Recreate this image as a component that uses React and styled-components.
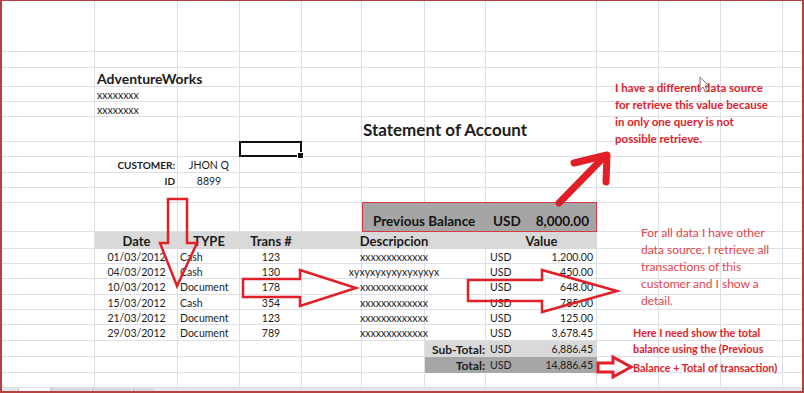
import React from 'react'
import styled, { createGlobalStyle } from 'styled-components'

const GlobalStyle = createGlobalStyle`
  html, body {
    margin: 0;
    padding: 0;
    background: #ffffff;
    overflow: hidden;
  }
`

const COLS = [95, 83, 62, 62, 60, 63, 61, 111, 62, 62, 62, 21]
const ROWS = [52, 16, 19, 15, 15, 25, 15, 16, 15, 15, 29, 17, 15, 15, 16, 15, 15, 16, 16, 16, 15]

const Frame = styled.div`
  position: relative;
  width: 804px;
  height: 393px;
  overflow: hidden;
  font-family: Lato, 'Liberation Sans', sans-serif;
  color: #1c1c1c;
`

const Sheet = styled.div`
  display: grid;
  grid-template-columns: ${COLS.map((c) => c + 'px').join(' ')};
  grid-template-rows: ${ROWS.map((r) => r + 'px').join(' ')};
`

const GridCell = styled.div`
  box-sizing: border-box;
  border-right: 1px solid #dcdfe3;
  border-bottom: 1px solid #dcdfe3;
`

const Cell = styled.div`
  grid-column: ${(p) => p.$col} / span ${(p) => p.$span || 1};
  grid-row: ${(p) => p.$row};
  display: flex;
  align-items: ${(p) => p.$valign || 'center'};
  justify-content: ${(p) => p.$align || 'flex-start'};
  padding: 0 ${(p) => p.$pad ?? 3}px;
  font-size: ${(p) => p.$size || 10.5}px;
  font-weight: ${(p) => (p.$bold ? 700 : 400)};
  white-space: nowrap;
  background: ${(p) => p.$bg || 'transparent'};
  box-sizing: border-box;
  z-index: 1;
`

const Shade = styled.div`
  grid-column: ${(p) => p.$col} / span ${(p) => p.$span || 1};
  grid-row: ${(p) => p.$row};
  background: ${(p) => p.$bg};
`

const BalanceBox = styled.div`
  grid-column: 6 / span 3;
  grid-row: 11;
  margin-top: -1px;
  background: #a5a5a5;
  border: 1px solid #d23b42;
  display: flex;
  align-items: flex-end;
  padding: 0 7px 2px 10px;
  font-size: 13.5px;
  font-weight: 700;
  color: #141414;
  z-index: 2;
`

const BalanceLabel = styled.span`
  width: 120px;
`

const BalanceCur = styled.span`
  flex: 1;
`

const Selected = styled.div`
  grid-column: 4;
  grid-row: 7;
  margin: -1px 0 0 -1px;
  border: 2px solid #111;
  position: relative;
  z-index: 2;
  &::after {
    content: '';
    position: absolute;
    right: -4px;
    bottom: -4px;
    width: 5px;
    height: 5px;
    background: #111;
    border: 1px solid #fff;
  }
`

const MoneyCell = styled(Cell)`
  justify-content: space-between;
  padding: 0 4px 0 4px;
`

const TabBar = styled.div`
  height: 5px;
  background: #e4e7eb;
  display: flex;
  gap: 2px;
  padding-left: 18px;
`

const Tab = styled.div`
  width: ${(p) => p.$w}px;
  background: ${(p) => (p.$active ? '#ffffff' : '#d6dae0')};
  border-left: 1px solid #b9bec6;
`

const Outline = styled.div`
  position: absolute;
  inset: 0;
  border: 2px solid #b8413f;
  border-top-width: 1px;
  pointer-events: none;
  z-index: 5;
`

const Overlay = styled.svg`
  position: absolute;
  left: 0;
  top: 0;
  z-index: 4;
  pointer-events: none;
`

const Note = styled.div`
  position: absolute;
  left: ${(p) => p.$x}px;
  top: ${(p) => p.$y}px;
  font-size: ${(p) => p.$size}px;
  line-height: ${(p) => p.$lh}px;
  font-weight: ${(p) => (p.$bold ? 700 : 400)};
  color: ${(p) => p.$color};
  white-space: nowrap;
  z-index: 3;
`

const rows = [
  ['01/03/2012', 'Cash', '123', 'xxxxxxxxxxxxx', '1,200.00'],
  ['04/03/2012', 'Cash', '130', 'xyxyxyxyxyxyxyxyx', '450.00'],
  ['10/03/2012', 'Document', '178', 'xxxxxxxxxxxxx', '648.00'],
  ['15/03/2012', 'Cash', '354', 'xxxxxxxxxxxxx', '785.00'],
  ['21/03/2012', 'Document', '123', 'xxxxxxxxxxxxx', '125.00'],
  ['29/03/2012', 'Document', '789', 'xxxxxxxxxxxxx', '3,678.45'],
]

function Arrows() {
  const red = '#e21f27'
  return (
    <Overlay width="804" height="393" viewBox="0 0 804 393">
      <g fill="none" stroke={red} strokeWidth="7" strokeLinecap="round" strokeLinejoin="round">
        <line x1="559" y1="203" x2="602" y2="159" />
        <polyline points="574,163 607,155 606,182" />
      </g>
      <g fill="none" stroke={red} strokeWidth="2.5" strokeLinejoin="miter">
        <polygon points="168,199 187,199 187,243 197,243 177,286 160,243 168,243" />
        <polygon points="243,279 300,279 300,270 356,288 300,306 300,297 243,297" />
        <polygon points="468,280 542,280 542,270 617,291 542,312 542,301 468,301" />
        <polygon strokeWidth="3" points="598,363 613,363 613,357 631,367 613,377 613,372 598,372" />
      </g>
      <path
        d="M700 77 L700 90 L703 87 L705.5 92 L707.5 91 L705 86 L709 86 Z"
        fill="#ffffff"
        stroke="#555"
        strokeWidth="0.8"
      />
    </Overlay>
  )
}

export default function App() {
  const gridCells = []
  ROWS.forEach((_, r) => {
    COLS.forEach((_, c) => {
      gridCells.push(<GridCell key={r + '-' + c} style={{ gridColumn: c + 1, gridRow: r + 1 }} />)
    })
  })

  return (
    <>
      <GlobalStyle />
      <Frame>
        <Sheet>
          {gridCells}

          <Cell $col={2} $row={3} $span={3} $size={14} $bold $pad={2} $valign="flex-end">
            AdventureWorks
          </Cell>
          <Cell $col={2} $row={4} $pad={2} $size={10.5}>xxxxxxxx</Cell>
          <Cell $col={2} $row={5} $pad={2} $size={10.5}>xxxxxxxx</Cell>

          <Cell $col={6} $row={6} $span={4} $size={17} $bold $pad={1}>
            Statement of Account
          </Cell>

          <Selected />

          <Cell $col={2} $row={8} $align="flex-end" $bold $size={10}>CUSTOMER:</Cell>
          <Cell $col={3} $row={8} $align="center">JHON Q</Cell>
          <Cell $col={2} $row={9} $align="flex-end" $bold $size={10}>ID</Cell>
          <Cell $col={3} $row={9} $align="center">8899</Cell>

          <BalanceBox>
            <BalanceLabel>Previous Balance</BalanceLabel>
            <BalanceCur>USD</BalanceCur>
            <span>8,000.00</span>
          </BalanceBox>

          <Shade $col={2} $span={7} $row={12} $bg="#d9d9d9" />
          <Cell $col={2} $row={12} $align="center" $bold $size={13} $valign="flex-end">Date</Cell>
          <Cell $col={3} $row={12} $align="center" $bold $size={13} $valign="flex-end">TYPE</Cell>
          <Cell $col={4} $row={12} $align="center" $bold $size={13} $valign="flex-end">Trans #</Cell>
          <Cell $col={5} $span={3} $row={12} $align="center" $bold $size={13} $valign="flex-end">
            Descripcion
          </Cell>
          <Cell $col={8} $row={12} $align="center" $bold $size={13} $valign="flex-end">Value</Cell>

          {rows.map((r, i) => (
            <React.Fragment key={i}>
              <Cell $col={2} $row={13 + i} $align="center">{r[0]}</Cell>
              <Cell $col={3} $row={13 + i} $pad={2}>{r[1]}</Cell>
              <Cell $col={4} $row={13 + i} $align="center">{r[2]}</Cell>
              <Cell $col={5} $span={3} $row={13 + i} $align="center">{r[3]}</Cell>
              <MoneyCell $col={8} $row={13 + i}>
                <span>USD</span>
                <span>{r[4]}</span>
              </MoneyCell>
            </React.Fragment>
          ))}

          <Shade $col={7} $span={2} $row={19} $bg="#d9d9d9" />
          <Cell $col={7} $row={19} $align="flex-end" $bold $size={12} $pad={1}>Sub-Total:</Cell>
          <MoneyCell $col={8} $row={19}>
            <span>USD</span>
            <span>6,886.45</span>
          </MoneyCell>

          <Shade $col={7} $span={2} $row={20} $bg="#a6a6a6" />
          <Cell $col={7} $row={20} $align="flex-end" $bold $size={12} $pad={1}>Total:</Cell>
          <MoneyCell $col={8} $row={20}>
            <span>USD</span>
            <span>14,886.45</span>
          </MoneyCell>
        </Sheet>

        <TabBar>
          <Tab $w={30} $active />
          <Tab $w={38} />
          <Tab $w={38} />
          <Tab $w={20} />
        </TabBar>

        <Note $x={615} $y={79} $size={11.5} $lh={17} $bold $color="#e1222b">
          I have a different data source
          <br />
          for retrieve this value because
          <br />
          in only one query is not
          <br />
          possible retrieve.
        </Note>

        <Note $x={641} $y={224} $size={12} $lh={17} $color="#e2434b">
          For all data I have other
          <br />
          data source, I retrieve all
          <br />
          transactions of this
          <br />
          customer and I show a
          <br />
          detail.
        </Note>

        <Note $x={633} $y={325} $size={10.8} $lh={16} $bold $color="#e1222b">
          Here I need show the total
          <br />
          balance using the (Previous
        </Note>
        <Note $x={633} $y={360} $size={10.8} $lh={16} $bold $color="#e1222b">
          Balance + Total of transaction)
        </Note>

        <Arrows />
        <Outline />
      </Frame>
    </>
  )
}
